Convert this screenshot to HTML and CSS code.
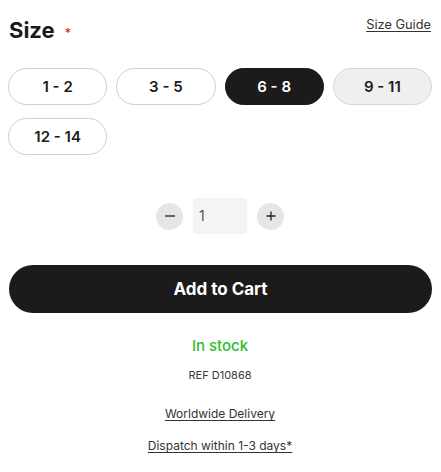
FILE: index.html
```html
<!DOCTYPE html>
<html lang="en">
<head>
<meta charset="utf-8">
<title>Size</title>
<link rel="stylesheet" href="styles.css">
</head>
<body>
<div class="product">
  <div class="size-head">
    <h2 class="size-title">Size <span class="req">*</span></h2>
    <a class="size-guide" href="#">Size Guide</a>
  </div>
  <div class="options">
    <button class="opt">1 - 2</button>
    <button class="opt">3 - 5</button>
    <button class="opt opt-active">6 - 8</button>
    <button class="opt opt-hover">9 - 11</button>
    <button class="opt">12 - 14</button>
  </div>
  <div class="qty">
    <button class="qty-btn" aria-label="Decrease">
      <svg width="12" height="12" viewBox="0 0 12 12"><path d="M1 6h10" stroke="#222" stroke-width="1.3"/></svg>
    </button>
    <div class="qty-input">1</div>
    <button class="qty-btn" aria-label="Increase">
      <svg width="12" height="12" viewBox="0 0 12 12"><path d="M1.5 6h9M6 1.5v9" stroke="#222" stroke-width="1.3"/></svg>
    </button>
  </div>
  <button class="add-cart">Add to Cart</button>
  <p class="stock">In stock</p>
  <p class="ref">REF D10868</p>
  <a class="info-link delivery" href="#">Worldwide Delivery</a>
  <a class="info-link dispatch" href="#">Dispatch within 1-3 days*</a>
</div>
</body>
</html>
```

FILE: styles.css
```css
* { box-sizing: border-box; }
html, body { margin: 0; padding: 0; background: #fff; }
body {
  font-family: Inter, "Noto Sans", "Liberation Sans", sans-serif;
  color: #1b1b1b;
}
.product {
  padding: 15px 9px 0 8px;
  display: flex;
  flex-direction: column;
}
.size-head {
  display: flex;
  justify-content: space-between;
  align-items: flex-start;
  height: 30px;
}
.size-title {
  margin: 0 0 0 1px;
  font-size: 22px;
  line-height: 30px;
  font-weight: 700;
  color: #1b1b1b;
}
.req {
  color: #e0242b;
  font-size: 12px;
  line-height: 0;
  font-weight: 500;
  vertical-align: 1px;
  margin-left: 5px;
}
.size-guide {
  margin-top: 2px;
  margin-right: 1px;
  font-size: 12.8px;
  line-height: 16px;
  color: #333;
  text-decoration: underline;
  text-underline-offset: 2px;
}
.options {
  margin-top: 23px;
  display: grid;
  grid-template-columns: repeat(4, 1fr);
  column-gap: 9px;
  row-gap: 13px;
}
.opt {
  height: 37px;
  border: 1px solid #cfcfcf;
  border-radius: 19px;
  background: #fff;
  font-family: inherit;
  font-size: 15px;
  font-weight: 600;
  color: #1b1b1b;
  padding: 0;
}
.opt-active {
  background: #1b1b1b;
  border-color: #1b1b1b;
  color: #fff;
}
.opt-hover {
  background: #efefef;
  border-color: #d6d6d6;
}
.qty {
  margin-top: 43px;
  display: flex;
  justify-content: center;
  align-items: center;
  gap: 10px;
}
.qty-btn {
  width: 27px;
  height: 27px;
  border-radius: 50%;
  border: none;
  background: #e6e6e6;
  padding: 0;
  display: flex;
  align-items: center;
  justify-content: center;
}
.qty-input {
  width: 54px;
  height: 36px;
  background: #f4f4f4;
  border-radius: 4px;
  font-size: 14px;
  color: #555;
  line-height: 36px;
  padding-left: 6px;
}
.add-cart {
  margin-top: 31px;
  margin-left: 1px;
  height: 48px;
  border: none;
  border-radius: 24px;
  background: #1b1b1b;
  color: #fff;
  font-family: inherit;
  font-size: 17px;
  font-weight: 700;
}
.stock {
  margin: 24px 0 0;
  text-align: center;
  font-size: 15px;
  line-height: 18px;
  font-weight: 500;
  color: #2ebd2e;
}
.ref {
  margin: 13px 0 0;
  text-align: center;
  font-size: 11px;
  line-height: 14px;
  color: #3a3a3a;
}
.info-link {
  align-self: center;
  font-size: 12px;
  line-height: 15px;
  color: #333;
  text-decoration: underline;
  text-underline-offset: 2px;
}
.delivery { margin-top: 24px; }
.dispatch { margin-top: 17px; }
```
